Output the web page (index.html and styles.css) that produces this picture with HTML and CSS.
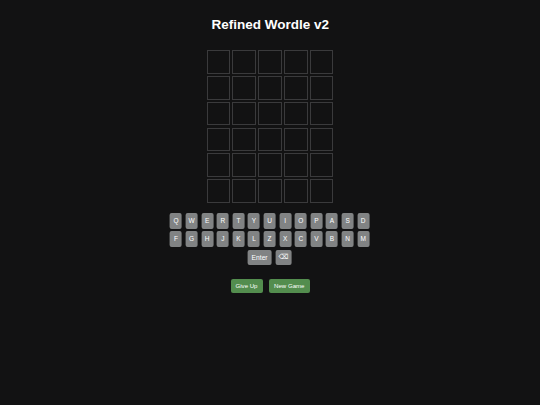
FILE: index.html
```html
<!DOCTYPE html>
<html>
<head>
<meta charset="utf-8">
<title>Refined Wordle v2</title>
<link rel="stylesheet" href="styles.css">
</head>
<body>
<div class="app">
  <h1 class="title">Refined Wordle v2</h1>
  <div class="board">
    <div class="tile"></div><div class="tile"></div><div class="tile"></div><div class="tile"></div><div class="tile"></div>
    <div class="tile"></div><div class="tile"></div><div class="tile"></div><div class="tile"></div><div class="tile"></div>
    <div class="tile"></div><div class="tile"></div><div class="tile"></div><div class="tile"></div><div class="tile"></div>
    <div class="tile"></div><div class="tile"></div><div class="tile"></div><div class="tile"></div><div class="tile"></div>
    <div class="tile"></div><div class="tile"></div><div class="tile"></div><div class="tile"></div><div class="tile"></div>
    <div class="tile"></div><div class="tile"></div><div class="tile"></div><div class="tile"></div><div class="tile"></div>
  </div>
  <div class="keyboard">
    <div class="key-row">
      <button class="key">Q</button><button class="key">W</button><button class="key">E</button><button class="key">R</button><button class="key">T</button><button class="key">Y</button><button class="key">U</button><button class="key">I</button><button class="key">O</button><button class="key">P</button><button class="key">A</button><button class="key">S</button><button class="key">D</button>
    </div>
    <div class="key-row">
      <button class="key">F</button><button class="key">G</button><button class="key">H</button><button class="key">J</button><button class="key">K</button><button class="key">L</button><button class="key">Z</button><button class="key">X</button><button class="key">C</button><button class="key">V</button><button class="key">B</button><button class="key">N</button><button class="key">M</button>
    </div>
    <div class="key-row key-row-last">
      <button class="key key-enter">Enter</button><button class="key key-back">⌫</button>
    </div>
  </div>
  <div class="actions">
    <button class="action">Give Up</button>
    <button class="action">New Game</button>
  </div>
</div>
</body>
</html>
```

FILE: styles.css
```css
html, body {
  margin: 0;
  padding: 0;
  background: #121213;
  width: 540px;
  height: 405px;
  overflow: hidden;
}

body {
  font-family: "Liberation Sans", Arial, sans-serif;
  color: #ffffff;
}

.app {
  display: flex;
  flex-direction: column;
  align-items: center;
  padding-top: 16.6px;
}

.title {
  margin: 0;
  font-size: 13.5px;
  line-height: 16px;
  font-weight: bold;
  color: #ffffff;
  transform: translateX(0.3px);
}

.board {
  margin-top: 17.7px;
  display: grid;
  grid-template-columns: repeat(5, 23.6px);
  grid-auto-rows: 23.6px;
  gap: 2.2px;
}

.tile {
  box-sizing: border-box;
  border: 1.5px solid #3a3a3c;
  background: #121213;
}

.keyboard {
  margin-top: 10.2px;
  display: flex;
  flex-direction: column;
  align-items: center;
  gap: 2.8px;
}

.key-row {
  display: flex;
  gap: 3.6px;
  transform: translateX(-0.4px);
}

.key-row-last {
  gap: 3.3px;
}

.key {
  box-sizing: border-box;
  width: 12px;
  height: 15.6px;
  padding: 0;
  border: none;
  border-radius: 2px;
  background: #818384;
  color: #ffffff;
  font-family: "Liberation Sans", Arial, sans-serif;
  font-size: 6.5px;
  line-height: 15.6px;
  text-align: center;
}

.key-enter {
  width: 24.4px;
  font-size: 6.7px;
}

.key-back {
  width: 16.7px;
  font-family: "DejaVu Sans", sans-serif;
  font-size: 7px;
}

.actions {
  margin-top: 13.4px;
  display: flex;
  gap: 6.5px;
}

.action {
  box-sizing: border-box;
  height: 14.6px;
  padding: 0 5px;
  border: none;
  border-radius: 2px;
  background: #538d4e;
  color: #ffffff;
  font-family: "Liberation Sans", Arial, sans-serif;
  font-size: 6.1px;
  line-height: 14.6px;
}
```
